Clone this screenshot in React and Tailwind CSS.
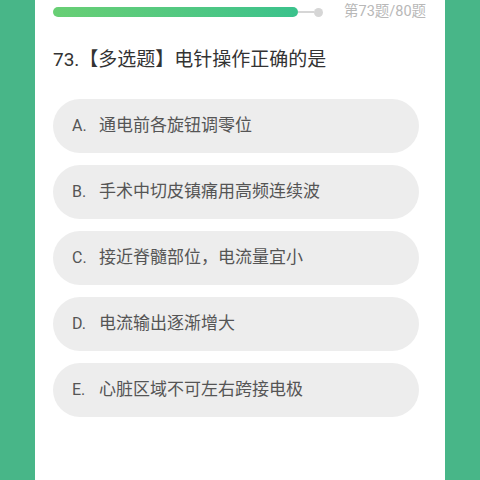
import React from 'react';

export default function App() {
  const options = [
    ['A.', '通电前各旋钮调零位'],
    ['B.', '手术中切皮镇痛用高频连续波'],
    ['C.', '接近脊髓部位，电流量宜小'],
    ['D.', '电流输出逐渐增大'],
    ['E.', '心脏区域不可左右跨接电极'],
  ];

  return (
    <div
      className="w-[480px] h-[480px] bg-[#48b688] flex justify-center overflow-hidden"
      style={{ fontFamily: '"Roboto", "Noto Sans CJK SC", sans-serif' }}
    >
      <div className="w-[410px] h-full bg-white flex flex-col">
        {/* progress */}
        <div className="flex items-center h-[24px] pl-[18px]">
          <div className="w-[245px] h-[10px] rounded-full bg-gradient-to-r from-[#68cf74] to-[#3ac28c]" />
          <div className="w-[16px] h-[2px] bg-[#d6d6d6]" />
          <div className="w-[9px] h-[9px] rounded-full bg-[#d6d6d6]" />
          <span className="ml-[21px] text-[14.5px] text-[#b8b8b8] leading-none">第73题/80题</span>
        </div>

        {/* question */}
        <div className="pl-[18px] mt-[23px] text-[19px] leading-[26px] text-[#333]">
          73.【多选题】电针操作正确的是
        </div>

        {/* options */}
        <div className="flex flex-col gap-[12px] mt-[26px] pl-[18px] pr-[26px]">
          {options.map(([k, v]) => (
            <div
              key={k}
              className="h-[54px] rounded-full bg-[#ededed] flex items-center pl-[19px] text-[17px] text-[#555]"
            >
              <span className="w-[27px] text-[16px]">{k}</span>
              <span>{v}</span>
            </div>
          ))}
        </div>
      </div>
    </div>
  );
}
